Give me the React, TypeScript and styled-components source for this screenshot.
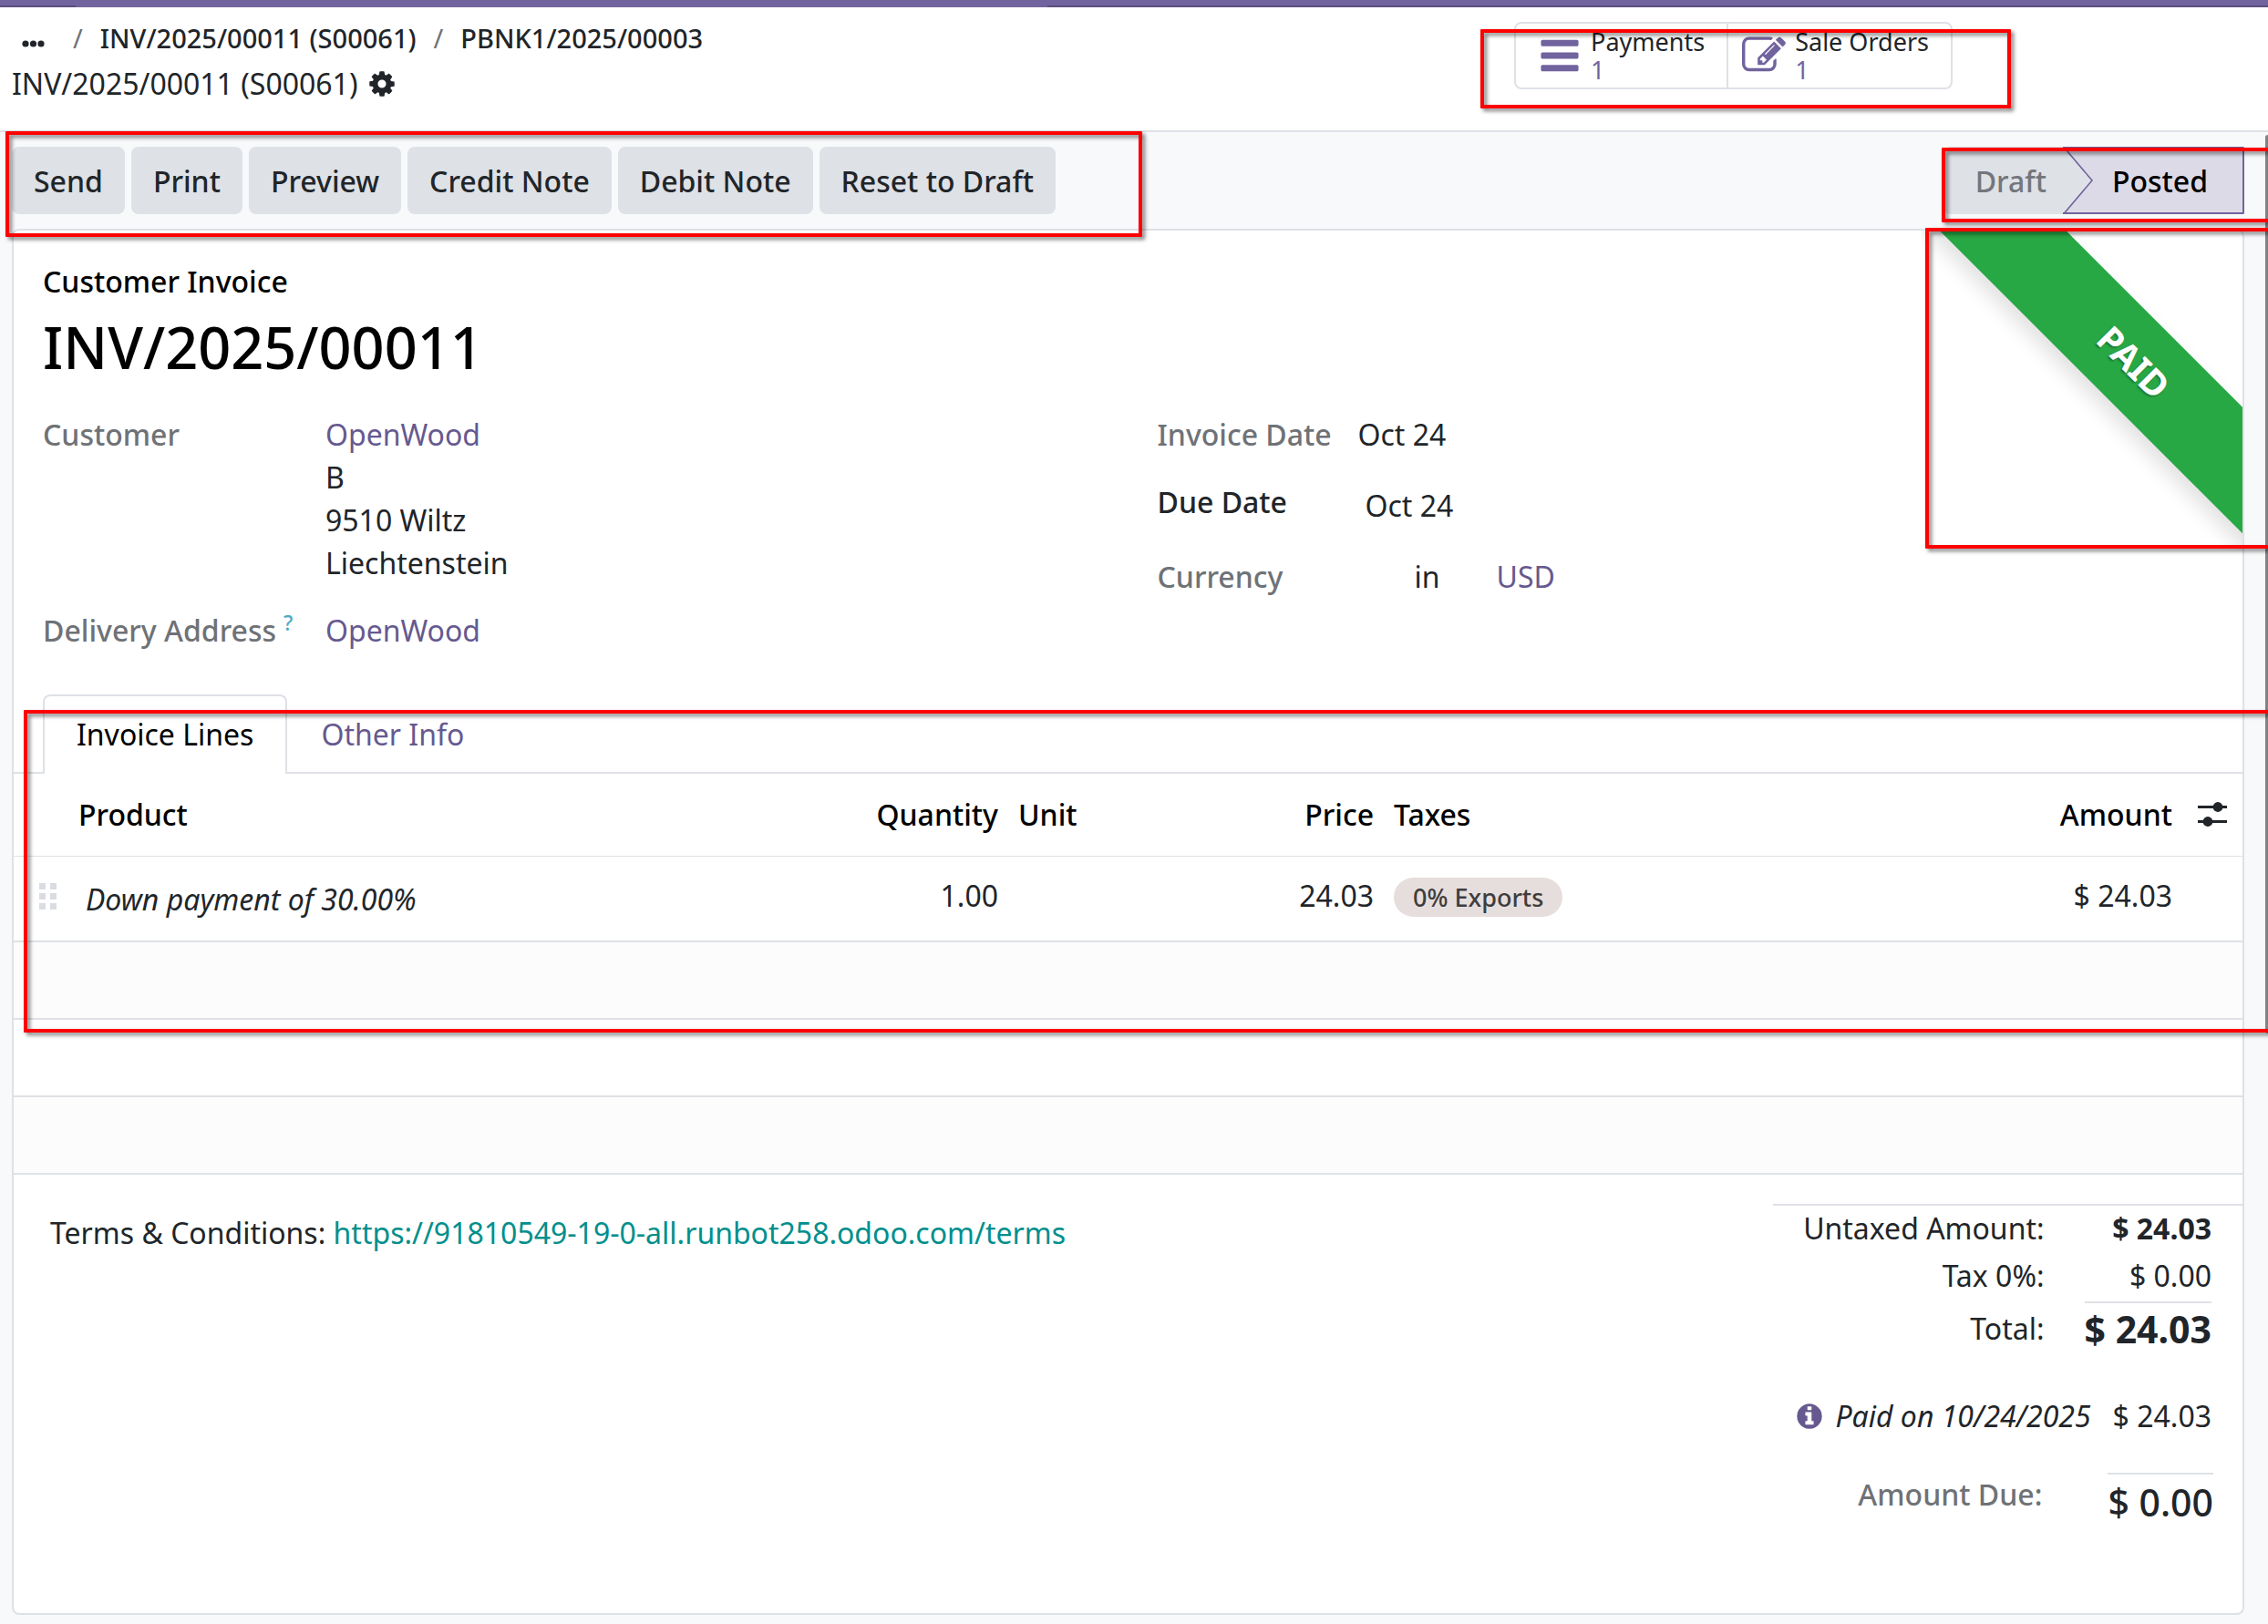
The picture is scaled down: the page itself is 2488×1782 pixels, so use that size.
import React, { useState } from "react";
import styled, { createGlobalStyle, css } from "styled-components";

const color = {
  brand: "#71639e",
  brandDark: "#5a4f7f",
  link: "#66598f",
  teal: "#008f8c",
  text: "#212529",
  muted: "#6f7276",
  border: "#dee1e6",
  canvas: "#f8f9fb",
  button: "#dee1e6",
  paid: "#28a745",
};

const GlobalStyle = createGlobalStyle`
  *, *::before, *::after { box-sizing: border-box; }
  body {
    margin: 0;
    background: ${color.canvas};
    color: ${color.text};
    font-family: "Noto Sans", "Open Sans", sans-serif;
    font-size: 32px;
    line-height: 47px;
  }
  button { font: inherit; color: inherit; border: 0; background: none; padding: 0; cursor: pointer; }
  a { color: ${color.link}; text-decoration: none; }
  h1, p, dl, dt, dd { margin: 0; font-weight: inherit; }
`;

const Page = styled.div`
  position: relative;
  overflow: hidden;
  padding-bottom: 10px;
`;

const Navbar = styled.div`
  display: flex;
  align-items: flex-end;
  height: 8px;
  background: ${color.brand};
`;

const NavUnderline = styled.span<{ $grow?: number; $visible?: boolean }>`
  flex: ${(p) => p.$grow ?? 0} 0 ${(p) => (p.$grow ? "0px" : "83px")};
  height: 2px;
  background: ${(p) => (p.$visible ? color.brandDark : "transparent")};
`;

const ScrollThumb = styled.div`
  position: absolute;
  top: 148px;
  right: 0;
  width: 3px;
  height: 986px;
  border-radius: 3px 0 0 3px;
  background: #808285;
`;

const Highlight = styled.div<{ $inset: string; $width?: number; $height?: number }>`
  position: absolute;
  z-index: 2;
  inset: ${(p) => p.$inset};
  width: ${(p) => (p.$width ? `${p.$width}px` : "auto")};
  height: ${(p) => (p.$height ? `${p.$height}px` : "auto")};
  border: 4px solid #ff0000;
  border-radius: 1px;
  filter: drop-shadow(3px 3px 2px rgba(0, 0, 0, 0.5));
  pointer-events: none;
`;

const Header = styled.header`
  display: flex;
  align-items: flex-start;
  padding: 13px 26px 28px 13px;
  border-bottom: 2px solid ${color.border};
  background: #fff;
`;

const Trail = styled.nav`
  display: flex;
  flex: 1;
  flex-direction: column;
  gap: 5px;
`;

const TrailRow = styled.div<{ $parents?: boolean }>`
  display: flex;
  align-items: center;
  gap: ${(p) => (p.$parents ? "19px" : "10px")};
  ${(p) =>
    p.$parents &&
    css`
      font-size: 29px;
      line-height: 42px;
      font-weight: 500;
    `}
  a { color: ${color.text}; }
`;

const Slash = styled.span`
  color: ${color.muted};
  font-weight: 400;
`;

const MoreButton = styled.button`
  display: flex;
  padding: 12px 12px 0 11px;
`;

const IconButton = styled.button`
  display: flex;
`;

const StatGroup = styled.div`
  position: relative;
  display: flex;
  height: 74px;
  margin: 3px 320px 0 0;
  border: 2px solid ${color.border};
  border-radius: 8px;
`;

const StatButton = styled.button`
  display: flex;
  align-items: center;
  gap: 10px;
  padding: 0 24px 0 15px;
  font-size: 27px;
  line-height: 31px;
  text-align: left;
  &:first-child { padding-left: 24px; }
  & + & { border-left: 2px solid ${color.border}; }
  svg { color: ${color.brand}; }
`;

const StatText = styled.span`
  display: flex;
  flex-direction: column;
`;

const StatCount = styled.span`
  color: ${color.brand};
`;

const ControlBar = styled.div`
  position: relative;
  display: flex;
  justify-content: space-between;
  padding: 16px 26px 16px 13px;
`;

const Actions = styled.div`
  display: flex;
  gap: 7px;
`;

const ActionButton = styled.button`
  height: 74px;
  padding: 0 24px;
  border-radius: 8px;
  background: ${color.button};
  font-weight: 500;
`;

const StatusBar = styled.div`
  display: flex;
  height: 74px;
`;

const DraftStep = styled.button`
  padding: 0 18px 0 35px;
  border-radius: 8px 0 0 8px;
  background: ${color.button};
  color: #73767b;
  font-weight: 500;
`;

const PostedStep = styled.button`
  display: flex;
  align-items: stretch;
  color: #000;
  font-weight: 500;
  background: ${color.button};
  svg { display: block; }
`;

const PostedLabel = styled.span`
  display: flex;
  align-items: center;
  padding: 0 38px 0 20px;
  border: 2px solid ${color.brand};
  border-left: 0;
  border-radius: 0 2px 2px 0;
  background: #dddae7;
`;

const Sheet = styled.main`
  position: relative;
  margin: 0 26px 0 13px;
  border: 2px solid ${color.border};
  border-radius: 8px;
  background: #fff;
`;

const RibbonClip = styled.div`
  position: absolute;
  top: 0;
  right: 0;
  width: 352px;
  height: 352px;
  overflow: hidden;
`;

const Ribbon = styled.span`
  position: absolute;
  top: 95px;
  right: -181px;
  width: 600px;
  height: 98px;
  background: ${color.paid};
  box-shadow: 0 11px 22px rgba(0, 0, 0, 0.12);
  color: #fff;
  font-size: 39px;
  line-height: 98px;
  font-weight: 700;
  text-align: center;
  text-shadow: 0 2px 2px rgba(0, 0, 0, 0.3);
  transform: rotate(45deg);
`;

const Intro = styled.section`
  padding: 32px 32px 47px;
`;

const DocType = styled.p`
  color: #000;
  font-weight: 500;
`;

const Title = styled.h1`
  margin: 10px 0 34px;
  color: #000;
  font-size: 63px;
  line-height: 77px;
  font-weight: 500;
`;

const Fields = styled.div`
  display: grid;
  grid-template-columns: 1fr 1fr;
  column-gap: 64px;
  align-items: start;
`;

const FieldGroup = styled.dl<{ $label: number }>`
  display: grid;
  grid-template-columns: ${(p) => p.$label}px 1fr;
  row-gap: 27px;
`;

const Label = styled.dt<{ $strong?: boolean }>`
  color: ${(p) => (p.$strong ? color.text : color.muted)};
  font-weight: 500;
`;

const HelpMark = styled.sup`
  margin-left: 8px;
  color: #52a9c4;
  font-size: 23px;
  line-height: 0;
  vertical-align: 12px;
`;

const Value = styled.dd<{ $inset?: boolean }>`
  padding: ${(p) => (p.$inset ? "4px 8px" : "0")};
`;

const CurrencyValue = styled.dd`
  display: flex;
  gap: 62px;
  padding-left: 62px;
`;

const AddressLine = styled.div``;

const Notebook = styled.section`
  position: relative;
`;

const Tabs = styled.div`
  display: flex;
  padding: 0 32px;
  box-shadow: inset 0 -2px ${color.border};
`;

const Tab = styled.button<{ $active: boolean }>`
  padding: 18px 35px 20px;
  border: 2px solid transparent;
  border-bottom: 0;
  border-radius: 8px 8px 0 0;
  color: ${color.link};
  ${(p) =>
    p.$active &&
    css`
      border-color: ${color.border};
      background: #fff;
      color: #000;
    `}
`;

const LinesTable = styled.table`
  width: 100%;
  table-layout: fixed;
  border-collapse: separate;
  border-spacing: 0;
`;

const Column = styled.col<{ $width?: number }>`
  width: ${(p) => (p.$width ? `${p.$width}px` : "auto")};
`;

const HeadCell = styled.th<{ $right?: boolean }>`
  padding: 21px 11px 22px;
  border-bottom: 1px solid ${color.border};
  color: #000;
  font-weight: 500;
  text-align: ${(p) => (p.$right ? "right" : "left")};
`;

const OptionsHeadCell = styled(HeadCell)`
  padding-left: 17px;
`;

const Cell = styled.td<{ $right?: boolean }>`
  height: 94px;
  padding: 19px 11px 0;
  border-bottom: 2px solid ${color.border};
  text-align: ${(p) => (p.$right ? "right" : "left")};
  vertical-align: top;
`;

const HandleCell = styled(Cell)`
  padding: 29px 0 0 28px;
  svg { display: block; }
`;

const ProductName = styled.em`
  display: block;
  padding: 4px 8px 0;
`;

const BlankCell = styled.td<{ $striped?: boolean }>`
  height: 85px;
  padding: 0;
  border-bottom: 2px solid ${color.border};
  background: ${(p) => (p.$striped ? "#fcfcfc" : "#fff")};
`;

const TaxBadge = styled.span`
  display: block;
  width: fit-content;
  margin-top: 4px;
  padding: 0 21px;
  border-radius: 22px;
  background: #e6dedd;
  color: #3f3d3d;
  font-size: 27px;
  line-height: 43px;
  font-weight: 500;
`;

const Footer = styled.section`
  display: flex;
  justify-content: space-between;
  align-items: flex-start;
  padding: 32px 0 94px 40px;
`;

const Terms = styled.p`
  padding-top: 8px;
  a { color: ${color.teal}; }
`;

const Totals = styled.div`
  width: 515px;
  border-top: 2px solid ${color.border};
  padding: 1px 32px 0 0;
`;

const Sums = styled.dl`
  display: grid;
  grid-template-columns: 1fr auto;
  column-gap: 44px;
  padding-right: 2px;
  text-align: right;
`;

const SumLabel = styled.dt<{ $total?: boolean }>`
  padding: ${(p) => (p.$total ? "6px 0 5px" : "0 0 5px")};
`;

const SumValue = styled.dd<{ $bold?: boolean }>`
  padding-bottom: 5px;
  font-weight: ${(p) => (p.$bold ? 700 : 400)};
`;

const GrandTotal = styled.dd`
  border-top: 2px solid ${color.border};
  font-size: 41px;
  line-height: 56px;
  font-weight: 700;
`;

const PaidRow = styled.div`
  display: flex;
  justify-content: flex-end;
  align-items: center;
  padding: 44px 2px 39px 0;
`;

const PaidText = styled.em`
  margin: 0 24px 0 12px;
`;

const DueRow = styled.dl`
  display: flex;
  justify-content: flex-end;
  gap: 72px;
`;

const DueValue = styled.dd`
  border-top: 2px solid ${color.border};
  padding-top: 2px;
  font-size: 41px;
  line-height: 56px;
  font-weight: 500;
`;

const iconPath = {
  cog: "M1152 896q0-106-75-181t-181-75-181 75-75 181 75 181 181 75 181-75 75-181zm512-109v222q0 12-8 23t-20 13l-185 28q-19 54-39 91 35 50 107 138 10 12 10 25t-9 23q-27 37-99 108t-94 71q-12 0-26-9l-138-108q-44 23-91 38-16 136-29 186-7 28-36 28h-222q-14 0-24.5-8.5t-11.5-21.5l-28-184q-49-16-90-37l-141 107q-10 9-25 9-14 0-25-11-126-114-165-168-7-10-7-23 0-12 8-23 15-21 51-66.5t54-70.5q-27-50-41-99l-183-27q-13-2-21-12.5t-8-23.5v-222q0-12 8-23t19-13l186-28q14-46 39-92-40-57-107-138-10-12-10-24 0-10 9-23 26-36 98.5-107.5t94.5-71.5q13 0 26 10l138 107q44-23 91-38 16-136 29-186 7-28 36-28h222q14 0 24.5 8.5t11.5 21.5l28 184q49 16 90 37l142-107q9-9 24-9 13 0 25 10 129 119 165 170 7 8 7 22 0 12-8 23-15 21-51 66.5t-54 70.5q26 50 41 98l183 28q13 2 21 12.5t8 23.5z",
  bars: "M1664 1344v128q0 26-19 45t-45 19h-1408q-26 0-45-19t-19-45v-128q0-26 19-45t45-19h1408q26 0 45 19t19 45zm0-512v128q0 26-19 45t-45 19h-1408q-26 0-45-19t-19-45v-128q0-26 19-45t45-19h1408q26 0 45 19t19 45zm0-512v128q0 26-19 45t-45 19h-1408q-26 0-45-19t-19-45v-128q0-26 19-45t45-19h1408q26 0 45 19t19 45z",
  edit: "M888 1184l116-116-152-152-116 116v56h96v96h56zm440-720q-16-16-33 1l-350 350q-17 17-1 33t33-1l350-350q17-17 1-33zm80 594v190q0 119-84.5 203.5t-203.5 84.5h-832q-119 0-203.5-84.5t-84.5-203.5v-832q0-119 84.5-203.5t203.5-84.5h832q63 0 117 25 15 7 18 23 3 17-9 29l-49 49q-14 14-32 8-23-6-45-6h-832q-66 0-113 47t-47 113v832q0 66 47 113t113 47h832q66 0 113-47t47-113v-126q0-13 9-22l64-64q15-15 35-7t20 29zm-96-738l288 288-672 672h-288v-288zm444 132l-92 92-288-288 92-92q28-28 68-28t68 28l152 152q28 28 28 68t-28 68z",
  info: "M1152 1376v-160q0-14-9-23t-23-9h-96v-512q0-14-9-23t-23-9h-320q-14 0-23 9t-9 23v160q0 14 9 23t23 9h96v320h-96q-14 0-23 9t-9 23v160q0 14 9 23t23 9h448q14 0 23-9t9-23zm-128-896v-160q0-14-9-23t-23-9h-192q-14 0-23 9t-9 23v160q0 14 9 23t23 9h192q14 0 23-9t9-23zm640 416q0 209-103 385.5t-279.5 279.5-385.5 103-385.5-103-279.5-279.5-103-385.5 103-385.5 279.5-279.5 385.5-103 385.5 103 279.5 279.5 103 385.5z",
};

function Icon({ name, size, fill = "currentColor" }: { name: keyof typeof iconPath; size: number; fill?: string }) {
  return (
    <svg width={size} height={size} viewBox="0 0 1792 1792" fill={fill} aria-hidden="true">
      <path d={iconPath[name]} />
    </svg>
  );
}

const Dots = () => (
  <svg width="25" height="8" viewBox="0 0 25 8" fill={color.text} aria-hidden="true">
    <circle cx="4" cy="4" r="3.6" />
    <circle cx="12.5" cy="4" r="3.6" />
    <circle cx="21" cy="4" r="3.6" />
  </svg>
);

const DragHandle = () => (
  <svg width="19" height="29" viewBox="0 0 19 29" fill="#d9dde2" aria-hidden="true">
    {[0, 11, 22].map((y) => (
      <React.Fragment key={y}>
        <rect x="0" y={y} width="7" height="7" />
        <rect x="12" y={y} width="7" height="7" />
      </React.Fragment>
    ))}
  </svg>
);

const Sliders = () => (
  <svg width="32" height="28" viewBox="0 0 32 28" fill={color.text} aria-hidden="true">
    <rect x="0" y="4" width="32" height="3" />
    <circle cx="22" cy="5.5" r="5.4" />
    <rect x="0" y="20" width="32" height="3" />
    <circle cx="11" cy="21.5" r="5.4" />
  </svg>
);

const Chevron = () => (
  <svg width="34" height="74" viewBox="0 0 34 74" aria-hidden="true">
    <path d="M0 0H34V74H0L32 37Z" fill="#dddae7" />
    <path d="M34 1H1.5L32 37L1.5 73H34" fill="none" stroke={color.brand} strokeWidth="1.6" />
    <path d="M0 1H34M0 73H34" stroke={color.brand} strokeWidth="2" />
  </svg>
);

const actions = ["Send", "Print", "Preview", "Credit Note", "Debit Note", "Reset to Draft"];
const tabs = ["Invoice Lines", "Other Info"];

export default function App() {
  const [tab, setTab] = useState(tabs[0]);
  return (
    <>
      <GlobalStyle />
      <Page>
        <Navbar>
          <NavUnderline $visible />
          <NavUnderline $grow={1066} />
          <NavUnderline $grow={1339} $visible />
        </Navbar>

        <Header>
          <Trail aria-label="Breadcrumb">
            <TrailRow $parents>
              <MoreButton aria-label="More"><Dots /></MoreButton>
              <Slash>/</Slash>
              <a href="#invoice">INV/2025/00011 (S00061)</a>
              <Slash>/</Slash>
              <a href="#payment">PBNK1/2025/00003</a>
            </TrailRow>
            <TrailRow>
              <span>INV/2025/00011 (S00061)</span>
              <IconButton aria-label="Settings"><Icon name="cog" size={32} /></IconButton>
            </TrailRow>
          </Trail>
          <StatGroup>
            <StatButton>
              <Icon name="bars" size={48} />
              <StatText>
                <span>Payments</span>
                <StatCount>1</StatCount>
              </StatText>
            </StatButton>
            <StatButton>
              <Icon name="edit" size={48} />
              <StatText>
                <span>Sale Orders</span>
                <StatCount>1</StatCount>
              </StatText>
            </StatButton>
            <Highlight $inset="6px -66px -23px auto" $width={582} />
          </StatGroup>
        </Header>

        <ControlBar>
          <Actions>
            {actions.map((name) => (
              <ActionButton key={name}>{name}</ActionButton>
            ))}
          </Actions>
          <StatusBar>
            <DraftStep>Draft</DraftStep>
            <PostedStep aria-current="step">
              <Chevron />
              <PostedLabel>Posted</PostedLabel>
            </PostedStep>
          </StatusBar>
          <Highlight $inset="-1px auto -9px 6px" $width={1247} />
          <Highlight $inset="17px -20px 7px auto" $width={378} />
        </ControlBar>

        <Sheet>
          <RibbonClip>
            <Ribbon>PAID</Ribbon>
          </RibbonClip>
          <Intro>
            <DocType>Customer Invoice</DocType>
            <Title>INV/2025/00011</Title>
            <Fields>
              <FieldGroup $label={310}>
                <Label>Customer</Label>
                <Value>
                  <a href="#openwood">OpenWood</a>
                  <AddressLine>B</AddressLine>
                  <AddressLine>9510 Wiltz</AddressLine>
                  <AddressLine>Liechtenstein</AddressLine>
                </Value>
                <Label>
                  Delivery Address<HelpMark>?</HelpMark>
                </Label>
                <Value>
                  <a href="#delivery">OpenWood</a>
                </Value>
              </FieldGroup>
              <FieldGroup $label={220}>
                <Label>Invoice Date</Label>
                <Value>Oct 24</Value>
                <Label $strong>Due Date</Label>
                <Value $inset>Oct 24</Value>
                <Label>Currency</Label>
                <CurrencyValue>
                  <span>in</span>
                  <a href="#usd">USD</a>
                </CurrencyValue>
              </FieldGroup>
            </Fields>
          </Intro>

          <Notebook>
            <Tabs role="tablist">
              {tabs.map((name) => (
                <Tab key={name} role="tab" aria-selected={tab === name} $active={tab === name} onClick={() => setTab(name)}>
                  {name}
                </Tab>
              ))}
            </Tabs>
            <LinesTable>
              <colgroup>
                <Column $width={60} />
                <Column />
                <Column $width={206} />
                <Column $width={200} />
                <Column $width={212} />
                <Column $width={480} />
                <Column $width={396} />
                <Column $width={66} />
              </colgroup>
              <thead>
                <tr>
                  <HeadCell />
                  <HeadCell>Product</HeadCell>
                  <HeadCell $right>Quantity</HeadCell>
                  <HeadCell>Unit</HeadCell>
                  <HeadCell $right>Price</HeadCell>
                  <HeadCell>Taxes</HeadCell>
                  <HeadCell $right>Amount</HeadCell>
                  <OptionsHeadCell>
                    <IconButton aria-label="Optional columns"><Sliders /></IconButton>
                  </OptionsHeadCell>
                </tr>
              </thead>
              <tbody>
                <tr>
                  <HandleCell><DragHandle /></HandleCell>
                  <Cell><ProductName>Down payment of 30.00%</ProductName></Cell>
                  <Cell $right>1.00</Cell>
                  <Cell />
                  <Cell $right>24.03</Cell>
                  <Cell><TaxBadge>0% Exports</TaxBadge></Cell>
                  <Cell $right>$ 24.03</Cell>
                  <Cell />
                </tr>
                <tr><BlankCell colSpan={8} $striped /></tr>
                <tr><BlankCell colSpan={8} /></tr>
                <tr><BlankCell colSpan={8} $striped /></tr>
              </tbody>
            </LinesTable>
            <Highlight $inset="17px -60px 156px 11px" />
          </Notebook>

          <Footer>
            <Terms>
              Terms &amp; Conditions: <a href="#terms">https://91810549-19-0-all.runbot258.odoo.com/terms</a>
            </Terms>
            <Totals>
              <Sums>
                <SumLabel>Untaxed Amount:</SumLabel>
                <SumValue $bold>$ 24.03</SumValue>
                <SumLabel>Tax 0%:</SumLabel>
                <SumValue>$ 0.00</SumValue>
                <SumLabel $total>Total:</SumLabel>
                <GrandTotal>$ 24.03</GrandTotal>
              </Sums>
              <PaidRow>
                <IconButton aria-label="Payment details"><Icon name="info" size={32} fill={color.link} /></IconButton>
                <PaidText>Paid on 10/24/2025</PaidText>
                <span>$ 24.03</span>
              </PaidRow>
              <DueRow>
                <Label>Amount Due:</Label>
                <DueValue>$ 0.00</DueValue>
              </DueRow>
            </Totals>
          </Footer>
          <Highlight $inset="-3px -60px auto auto" $width={408} $height={352} />
        </Sheet>
        <ScrollThumb />
      </Page>
    </>
  );
}
